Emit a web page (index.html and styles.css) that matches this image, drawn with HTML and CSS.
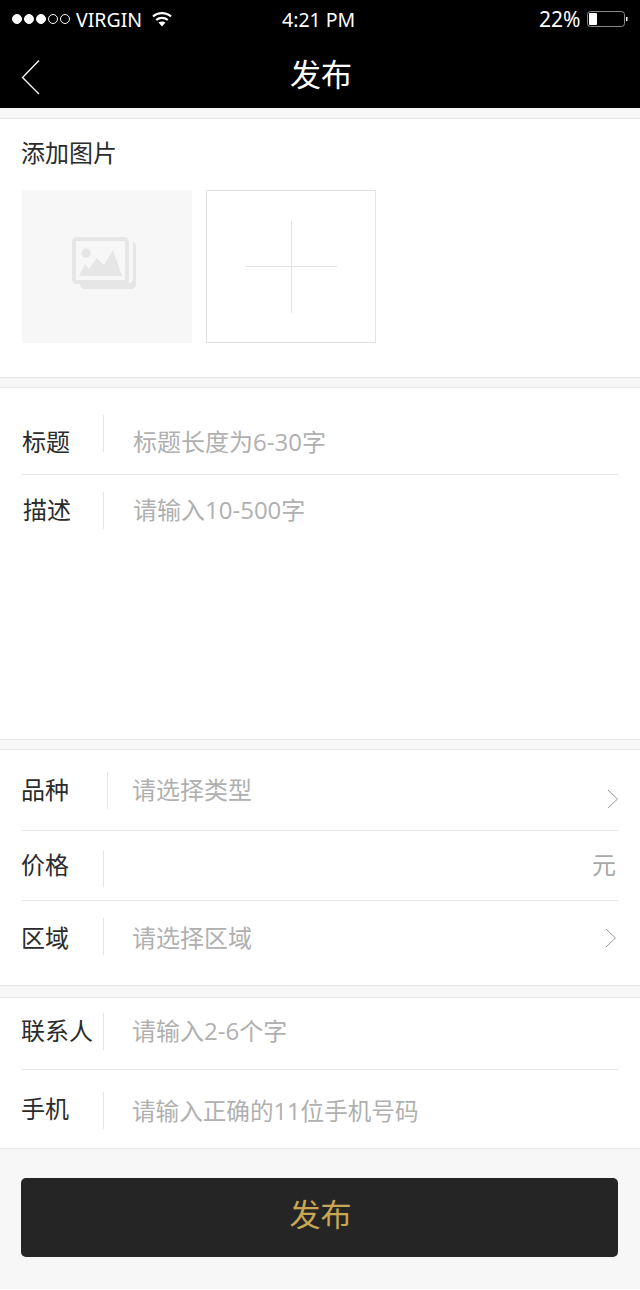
FILE: index.html
```html
<!DOCTYPE html>
<html lang="zh-CN">
<head>
    <meta charset="UTF-8">
    <meta name="viewport" content="width=device-width, initial-scale=1.0">
    <title>发布</title>
    <link rel="stylesheet" href="styles.css">
</head>
<body>
    <header class="top">
        <div class="status-bar">
            <div class="signal">
                <span class="dot on"></span><span class="dot on"></span><span class="dot on"></span><span class="dot"></span><span class="dot"></span>
            </div>
            <span class="carrier">VIRGIN</span>
            <svg class="wifi" width="20" height="16" viewBox="0 0 20 16">
                <path d="M1 5.5C6 1 14 1 19 5.5" fill="none" stroke="#fff" stroke-width="2.2"/>
                <path d="M4.2 9C7.5 6.2 12.5 6.2 15.8 9" fill="none" stroke="#fff" stroke-width="2.2"/>
                <path d="M6.5 11.6L10 15.4L13.5 11.6C11.5 10.2 8.5 10.2 6.5 11.6Z" fill="#fff"/>
            </svg>
            <span class="time">4:21 PM</span>
            <span class="percent">22%</span>
            <svg class="battery" width="42" height="18" viewBox="0 0 42 18">
                <rect x="0.5" y="1.5" width="37" height="15" rx="3" fill="none" stroke="#8a8a8a"/>
                <rect x="2" y="3" width="8" height="12" rx="1" fill="#fff"/>
                <path d="M39 7H40.5V11H39Z" fill="#fff"/>
            </svg>
        </div>
        <nav class="nav">
            <svg class="back" width="20" height="36" viewBox="0 0 20 36">
                <path d="M18 1.5L1.5 18.5L18 35" fill="none" stroke="#fff" stroke-width="1.3"/>
            </svg>
            <h1 class="nav-title">发布</h1>
        </nav>
    </header>

    <main>
        <section class="panel photos">
            <h2 class="photos-title">添加图片</h2>
            <div class="photo-list">
                <div class="photo">
                    <svg width="170" height="153" viewBox="0 0 170 153">
                        <path d="M58 93H107C109 93 111 91 111 89V51C113 52 114 54 114 56V94C114 97 112 99 109 99H63C60 99 58 97 58 95Z" fill="#e6e6e6"/>
                        <rect x="52" y="49" width="53" height="43" rx="2.5" fill="none" stroke="#e6e6e6" stroke-width="4"/>
                        <circle cx="64" cy="63" r="4.7" fill="#e6e6e6"/>
                        <path d="M57 86L63 74L67 79L75 68L82 75L91 60L100 86Z" fill="#e6e6e6"/>
                    </svg>
                </div>
                <div class="photo add">
                    <svg width="168" height="151" viewBox="0 0 168 151">
                        <path d="M38 75.5H130M84.5 30V122" fill="none" stroke="#e3e3e3"/>
                    </svg>
                </div>
            </div>
        </section>

        <section class="panel text-panel">
            <div class="row title-row">
                <span class="label">标题</span>
                <span class="field">标题长度为6-30字</span>
            </div>
            <div class="row desc-row">
                <span class="label">描述</span>
                <span class="field">请输入10-500字</span>
            </div>
        </section>

        <section class="panel options-panel">
            <div class="row kind-row">
                <span class="label">品种</span>
                <span class="field">请选择类型</span>
                <svg class="arrow" width="12" height="20" viewBox="0 0 12 20">
                    <path d="M1 1L10.5 10L1 19" fill="none" stroke="#999"/>
                </svg>
            </div>
            <div class="row price-row">
                <span class="label">价格</span>
                <span class="field"></span>
                <span class="unit">元</span>
            </div>
            <div class="row area-row">
                <span class="label">区域</span>
                <span class="field">请选择区域</span>
                <svg class="arrow" width="12" height="20" viewBox="0 0 12 20">
                    <path d="M1 1L10.5 10L1 19" fill="none" stroke="#999"/>
                </svg>
            </div>
        </section>

        <section class="panel contact-panel">
            <div class="row contact-row">
                <span class="label">联系人</span>
                <span class="field">请输入2-6个字</span>
            </div>
            <div class="row phone-row">
                <span class="label">手机</span>
                <span class="field">请输入正确的11位手机号码</span>
            </div>
        </section>
    </main>

    <footer class="bottom">
        <button class="submit">发布</button>
    </footer>
</body>
</html>
```

FILE: styles.css
```css
* {
    box-sizing: border-box;
}
body {
    margin: 0;
    background: #fff;
    color: #2b2b2b;
    font-family: "Open Sans", "Noto Sans CJK SC", sans-serif;
    font-size: 24px;
}

/* header */
.top {
    background: #000;
    color: #fff;
    height: 108px;
}
.status-bar {
    display: flex;
    align-items: center;
    height: 38px;
    padding-left: 12px;
    font-family: "Noto Sans", sans-serif;
    font-size: 19.5px;
}
.signal {
    display: flex;
    gap: 2px;
}
.dot {
    width: 10px;
    height: 10px;
    border: 1px solid #fff;
    border-radius: 50%;
}
.dot.on {
    background: #fff;
}
.carrier {
    margin-left: 6px;
    width: 66px;
}
.wifi {
    margin-left: 10px;
}
.time {
    margin-left: 110px;
    width: 72px;
    white-space: nowrap;
}
.percent {
    margin-left: 185px;
    width: 41px;
    font-size: 21px;
}
.battery {
    margin-left: 7px;
}
.nav {
    display: flex;
    justify-content: center;
    position: relative;
    height: 70px;
}
.back {
    position: absolute;
    left: 21px;
    top: 21px;
}
.nav-title {
    margin: 0 0 0 2px;
    font-size: 31px;
    font-weight: 400;
    line-height: 72px;
}

/* panels */
main {
    padding-top: 10px;
    background: #f7f7f7;
}
.panel {
    background: #fff;
    border-top: 1px solid #e6e6e6;
    border-bottom: 1px solid #e6e6e6;
    margin-bottom: 9px;
}
.photos {
    height: 260px;
    padding: 0 22px;
}
.photos-title {
    margin: 0 0 0 -1px;
    padding-top: 16px;
    height: 71px;
    font-size: 24px;
    font-weight: 400;
    line-height: 36px;
}
.photo-list {
    display: flex;
    gap: 14px;
}
.photo {
    width: 170px;
    height: 153px;
    background: #f7f7f7;
}
.photo svg {
    display: block;
}
.photo.add {
    background: #fff;
    border: 1px solid #e3e3e3;
}
.text-panel {
    height: 353px;
}
.options-panel {
    height: 237px;
    margin-bottom: 11px;
}
.contact-panel {
    height: 152px;
    margin-bottom: 0;
}

/* rows */
.row {
    --lh: 37px;
    display: flex;
    align-items: flex-start;
    margin: 0 22px;
    border-bottom: 1px solid #e6e6e6;
}
.row:last-child {
    border-bottom: none;
}
.label {
    width: 81px;
    flex: none;
    height: 37px;
    line-height: var(--lh);
    white-space: nowrap;
}
.field {
    height: 37px;
    padding-left: 29px;
    border-left: 1px solid #e6e6e6;
    color: #b0b0b0;
    line-height: var(--lh);
    white-space: nowrap;
}
.arrow {
    margin-left: auto;
}
.unit {
    margin-left: auto;
    padding-right: 2px;
    height: 37px;
    color: #a8a8a8;
    line-height: var(--lh);
}
.title-row {
    --lh: 54px;
    height: 87px;
    padding-top: 27px;
}
.desc-row {
    --lh: 36px;
    height: 264px;
    padding-top: 17px;
}
.desc-row .label {
    padding-left: 1px;
}
.kind-row {
    --lh: 36px;
    height: 81px;
    padding-top: 22px;
}
.kind-row .label {
    width: 85px;
    margin-left: -1px;
    margin-right: 1px;
}
.kind-row .field {
    padding-left: 24px;
}
.kind-row .arrow {
    margin: 17px -1px 0 auto;
}
.price-row {
    --lh: 29px;
    height: 70px;
    padding-top: 19px;
}
.price-row .label,
.area-row .label,
.contact-row .label,
.phone-row .label {
    margin-left: -1px;
    margin-right: 1px;
}
.area-row {
    --lh: 39px;
    height: 84px;
    padding-top: 17px;
}
.area-row .field {
    padding-left: 28px;
}
.area-row .arrow {
    margin: 10px 1px 0 auto;
}
.contact-row {
    --lh: 35px;
    height: 72px;
    padding-top: 15px;
}
.contact-row .field {
    padding-left: 28px;
}
.phone-row {
    --lh: 33px;
    height: 78px;
    padding-top: 22px;
}
.phone-row .field {
    padding-left: 28px;
    font-size: 23.6px;
    line-height: 39px;
}

/* footer */
.bottom {
    height: 140px;
    padding: 29px 22px 0 21px;
    background: #f7f7f7;
}
.submit {
    display: block;
    width: 100%;
    height: 79px;
    padding: 0 0 11px 2px;
    border: none;
    border-radius: 5px;
    background: #252525;
    color: #c8a752;
    font-family: inherit;
    font-size: 31px;
}
```
